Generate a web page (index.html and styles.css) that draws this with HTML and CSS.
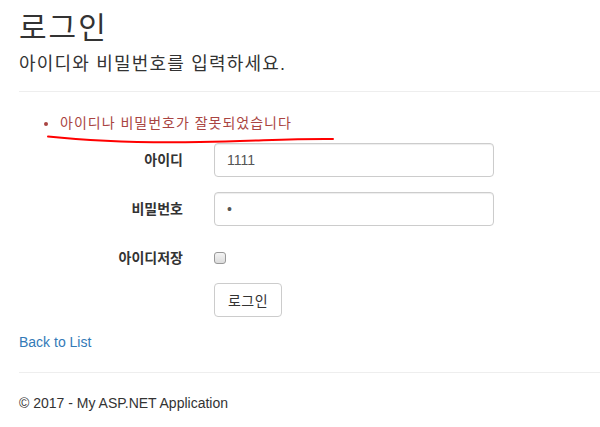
FILE: index.html
```html
<!DOCTYPE html>
<html lang="ko">
<head>
<meta charset="utf-8">
<title>로그인</title>
<link rel="stylesheet" href="styles.css">
</head>
<body>
<div class="page">
  <h2 class="title">로그인</h2>
  <h4 class="subtitle">아이디와 비밀번호를 입력하세요.</h4>
  <hr class="rule top-rule">
  <ul class="errors">
    <li>아이디나 비밀번호가 잘못되었습니다</li>
  </ul>
  <form class="login-form">
    <div class="form-row">
      <label class="form-label" for="uid">아이디</label>
      <input class="form-input" id="uid" type="text" value="1111">
    </div>
    <div class="form-row">
      <label class="form-label" for="pwd">비밀번호</label>
      <input class="form-input" id="pwd" type="password" value="1">
    </div>
    <div class="form-row check-row">
      <label class="form-label" for="save">아이디저장</label>
      <span class="check-cell"><span class="checkbox" id="save"></span></span>
    </div>
    <div class="form-row button-row">
      <span></span>
      <span><button class="btn" type="button">로그인</button></span>
    </div>
  </form>
  <div class="back"><a href="#">Back to List</a></div>
  <hr class="rule bottom-rule">
  <footer class="footer">© 2017 - My ASP.NET Application</footer>
</div>
<svg class="scribble" width="600" height="427" viewBox="0 0 600 427" aria-hidden="true">
  <path d="M48 136.5 C 90 141, 140 143, 200 142 S 290 138.5, 333 139" fill="none" stroke="#ff0000" stroke-width="2" stroke-linecap="round"/>
</svg>
</body>
</html>
```

FILE: styles.css
```css
html, body {
  margin: 0;
  padding: 0;
  background: #fff;
}
body {
  font-family: "Liberation Sans", "Noto Sans CJK KR", Arial, sans-serif;
  font-size: 14px;
  line-height: 1.42857;
  color: #333;
  position: relative;
  width: 600px;
  height: 427px;
  overflow: hidden;
}
.page {
  padding: 0 0 0 19px;
}
.title {
  font-size: 30px;
  font-weight: 400;
  line-height: 1.1;
  letter-spacing: 2px;
  margin: 11px 0 0;
}
.subtitle {
  font-size: 18px;
  font-weight: 400;
  line-height: 1.1;
  letter-spacing: 1.2px;
  margin: 11px 0 0;
}
.rule {
  border: 0;
  border-top: 1px solid #eee;
  margin: 0;
}
.top-rule {
  margin-top: 16px;
}
.errors {
  color: #a94442;
  margin: 21px 0 0;
  padding-left: 40px;
  line-height: 20px;
  letter-spacing: 1px;
}
.errors li {
  padding-left: 1px;
}
.login-form {
  margin-top: 10px;
}
.form-row {
  display: grid;
  grid-template-columns: 164px 280px;
  column-gap: 31px;
  align-items: center;
  margin-bottom: 15px;
}
.form-label {
  text-align: right;
  font-weight: bold;
  line-height: 20px;
}
.form-input {
  box-sizing: border-box;
  height: 34px;
  width: 280px;
  padding: 6px 12px;
  font-family: inherit;
  font-size: 14px;
  color: #555;
  border: 1px solid #ccc;
  border-radius: 4px;
  box-shadow: inset 0 1px 1px rgba(0,0,0,0.075);
  margin: 0;
}
.check-row {
  align-items: start;
  padding-top: 7px;
  height: 20px;
}
.check-cell {
  display: block;
  height: 20px;
}
.checkbox {
  display: block;
  box-sizing: border-box;
  width: 12px;
  height: 12px;
  border: 1px solid #999;
  border-radius: 3px;
  background: linear-gradient(#f4f4f4, #dcdcdc);
  margin-top: 4px;
}
.button-row {
  margin-bottom: 0;
}
.btn {
  box-sizing: border-box;
  height: 34px;
  width: 68px;
  padding: 6px 12px;
  font-family: inherit;
  font-size: 14px;
  color: #333;
  background: #fff;
  border: 1px solid #ccc;
  border-radius: 4px;
  letter-spacing: 0.5px;
  margin: 0;
}
.back {
  margin-top: 15px;
  line-height: 20px;
}
.back a {
  color: #337ab7;
  text-decoration: none;
}
.bottom-rule {
  margin-top: 20px;
}
.footer {
  margin-top: 20px;
  line-height: 20px;
}
.scribble {
  position: absolute;
  left: 0;
  top: 0;
  pointer-events: none;
}
```
